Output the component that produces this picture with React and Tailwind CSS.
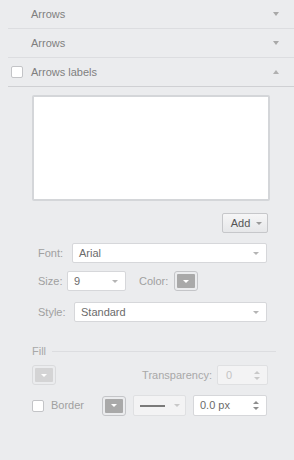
import React from "react";

const Tri = ({ up = false, color = "border-t-[#a8a8a8]", colorUp = "border-b-[#a8a8a8]" }) =>
  up ? (
    <div className={`w-0 h-0 border-l-[3.5px] border-r-[3.5px] border-b-[4px] border-l-transparent border-r-transparent ${colorUp}`} />
  ) : (
    <div className={`w-0 h-0 border-l-[3.5px] border-r-[3.5px] border-t-[4px] border-l-transparent border-r-transparent ${color}`} />
  );

const SmallTri = ({ color = "border-t-[#b4b4b4]" }) => (
  <div className={`w-0 h-0 border-l-[3px] border-r-[3px] border-t-[3px] border-l-transparent border-r-transparent ${color}`} />
);

const Select = ({ w, text }) => (
  <div className={`${w} h-[20px] bg-white border border-[#d6d7da] rounded-[2px] flex items-center justify-between pl-[6px] pr-[7px]`}>
    <span className="text-[11px] text-[#6b6b6b] leading-none">{text}</span>
    <SmallTri />
  </div>
);

const ColorBtn = ({ disabled = false }) => (
  <div className={`w-[24px] h-[20px] rounded-[3px] border ${disabled ? "border-[#dadbdd]" : "border-[#c4c5c8]"} p-[2px]`}>
    <div className={`w-full h-full rounded-[1px] ${disabled ? "bg-[#d4d4d5]" : "bg-[#a9a9a9]"} flex items-center justify-center`}>
      <SmallTri color="border-t-white" />
    </div>
  </div>
);

const Spin = ({ light = false }) => (
  <div className="flex flex-col gap-[3px] items-center">
    <div className={`w-0 h-0 border-l-[3px] border-r-[3px] border-b-[3px] border-l-transparent border-r-transparent ${light ? "border-b-[#c8c8c8]" : "border-b-[#8e8e8e]"}`} />
    <div className={`w-0 h-0 border-l-[3px] border-r-[3px] border-t-[3px] border-l-transparent border-r-transparent ${light ? "border-t-[#c8c8c8]" : "border-t-[#8e8e8e]"}`} />
  </div>
);

const Checkbox = () => (
  <div className="w-[12px] h-[12px] rounded-[2px] border border-[#c3c4c7] bg-white" />
);

export default function App() {
  return (
    <div
      className="w-[294px] h-[460px] bg-[#ebecee] overflow-hidden"
      style={{ fontFamily: '"Liberation Sans", Arial, sans-serif' }}
    >
      <div className="ml-2 h-[29px] border-b border-[#dcdde0] flex items-center justify-between pl-[23px] pr-[15px]">
        <span className="text-[11px] text-[#7f7f7f]">Arrows</span>
        <Tri />
      </div>
      <div className="ml-2 h-[29px] border-b border-[#dcdde0] flex items-center justify-between pl-[23px] pr-[15px]">
        <span className="text-[11px] text-[#7f7f7f]">Arrows</span>
        <Tri />
      </div>
      <div className="ml-2 h-[29px] border-b border-[#cfd0d3] flex items-center justify-between pl-[3px] pr-[15px]">
        <div className="flex items-center gap-[8px]">
          <Checkbox />
          <span className="text-[11px] text-[#7f7f7f]">Arrows labels</span>
        </div>
        <Tri up colorUp="border-b-[#b0b0b0]" />
      </div>

      <div className="ml-[32px] mt-[8px] w-[238px] h-[106px] bg-white border-2 border-[#d4d6d9] rounded-[2px]" />

      <div className="flex justify-end mr-[26px] mt-[12px]">
        <div className="w-[46px] h-[20px] rounded-[2px] border border-[#c6c7ca] bg-gradient-to-b from-[#f6f6f7] to-[#e6e7e9] flex items-center justify-center gap-[6px] pl-[3px]">
          <span className="text-[11px] text-[#555] leading-none">Add</span>
          <SmallTri color="border-t-[#9a9a9a]" />
        </div>
      </div>

      <div className="flex items-center mt-[10px] pl-[38px]">
        <span className="w-[34px] text-[11px] text-[#a0a0a0]">Font:</span>
        <Select w="w-[195px]" text="Arial" />
      </div>

      <div className="flex items-center mt-[8px] pl-[38px]">
        <span className="w-[29px] text-[11px] text-[#a0a0a0]">Size:</span>
        <Select w="w-[59px]" text="9" />
        <span className="ml-[13px] w-[35px] text-[11px] text-[#a0a0a0]">Color:</span>
        <ColorBtn />
      </div>

      <div className="flex items-center mt-[11px] pl-[38px]">
        <span className="w-[36px] text-[11px] text-[#a0a0a0]">Style:</span>
        <Select w="w-[193px]" text="Standard" />
      </div>

      <div className="flex items-center mt-[22px] ml-[32px] mr-[18px] h-[14px]">
        <span className="text-[11px] text-[#a8a8a8]">Fill</span>
        <div className="flex-1 ml-[6px] h-px bg-[#dcdde0]" />
      </div>

      <div className="flex items-center justify-between mt-[7px] ml-[32px] mr-[26px]">
        <ColorBtn disabled />
        <div className="flex items-center">
          <span className="text-[11px] text-[#a8a8a8] mr-[5px]">Transparency:</span>
          <div className="w-[51px] h-[20px] rounded-[2px] border border-[#dfe0e2] bg-[#f3f3f4] flex items-center justify-between pl-[8px] pr-[7px]">
            <span className="text-[11px] text-[#c4c4c4] leading-none">0</span>
            <Spin light />
          </div>
        </div>
      </div>

      <div className="flex items-center mt-[10px] ml-[32px]">
        <Checkbox />
        <span className="ml-[7px] w-[51px] text-[11px] text-[#a0a0a0]">Border</span>
        <ColorBtn />
        <div className="ml-[7px] w-[53px] h-[21px] rounded-[2px] border border-[#dfe0e2] bg-[#f3f3f4] flex items-center pl-[6px]">
          <div className="w-[25px] h-[2px] bg-[#7a7a7a]" />
          <div className="ml-[9px]">
            <SmallTri color="border-t-[#c8c8c8]" />
          </div>
        </div>
        <div className="ml-[7px] w-[74px] h-[21px] rounded-[2px] border border-[#d6d7da] bg-white flex items-center justify-between pl-[6px] pr-[7px]">
          <span className="text-[11px] text-[#6b6b6b] leading-none">0.0 px</span>
          <Spin />
        </div>
      </div>
    </div>
  );
}
